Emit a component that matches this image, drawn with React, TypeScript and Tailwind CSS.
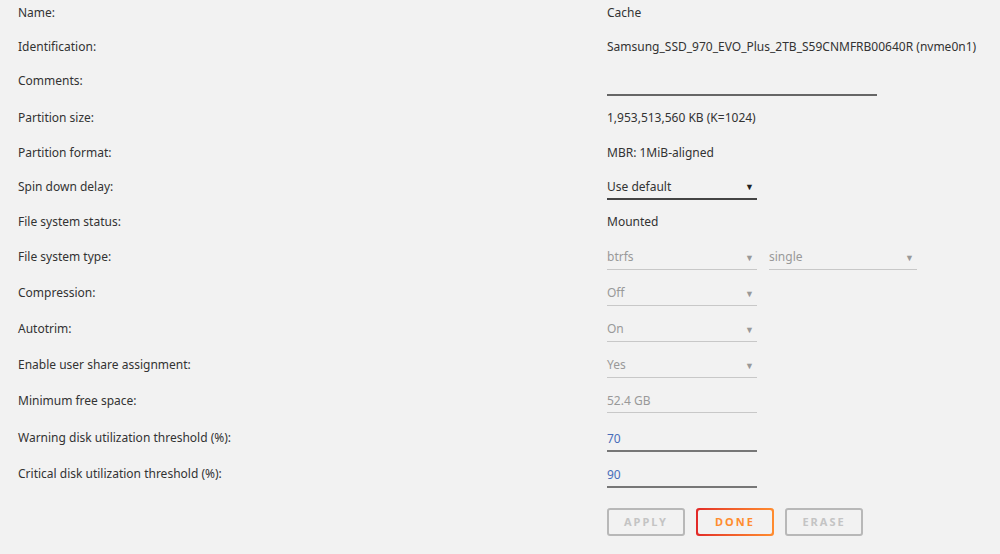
import React from "react";

type Row = { label: string; h: string; value: React.ReactNode };

const Arrow = ({ dark }: { dark?: boolean }) => (
  <span className={`text-[9px] leading-none ${dark ? "text-[#222]" : "text-[#999]"}`}>▼</span>
);

const Sel = ({ text, dark, w = "w-[150px]" }: { text: string; dark?: boolean; w?: string }) => (
  <div
    className={`${w} h-[26px] flex items-center justify-between pr-[3px] pt-[1px] ${
      dark ? "border-b-2 border-[#444] text-[#333]" : "border-b border-[#c8c8c8] text-[#999]"
    }`}
  >
    <span>{text}</span>
    <Arrow dark={dark} />
  </div>
);

const Plain = ({ text }: { text: string }) => (
  <div className="h-[25px] pt-[1px] flex items-center text-[#333]">{text}</div>
);

export default function App() {
  const rows: Row[] = [
    { label: "Name:", h: "h-[34px]", value: <Plain text="Cache" /> },
    { label: "Identification:", h: "h-[34px]", value: <Plain text="Samsung_SSD_970_EVO_Plus_2TB_S59CNMFRB00640R (nvme0n1)" /> },
    { label: "Comments:", h: "h-[37px]", value: <div className="w-[270px] h-[28px] border-b-2 border-[#666]" /> },
    { label: "Partition size:", h: "h-[35px]", value: <Plain text="1,953,513,560 KB (K=1024)" /> },
    { label: "Partition format:", h: "h-[34px]", value: <Plain text="MBR: 1MiB-aligned" /> },
    { label: "Spin down delay:", h: "h-[35px]", value: <Sel text="Use default" dark /> },
    { label: "File system status:", h: "h-[35px]", value: <Plain text="Mounted" /> },
    {
      label: "File system type:",
      h: "h-[36px]",
      value: (
        <div className="flex gap-[12px]">
          <Sel text="btrfs" />
          <Sel text="single" w="w-[148px]" />
        </div>
      ),
    },
    { label: "Compression:", h: "h-[36px]", value: <Sel text="Off" /> },
    { label: "Autotrim:", h: "h-[36px]", value: <Sel text="On" /> },
    { label: "Enable user share assignment:", h: "h-[36px]", value: <Sel text="Yes" /> },
    {
      label: "Minimum free space:",
      h: "h-[37px]",
      value: (
        <div className="w-[150px] h-[25px] pt-[1px] border-b border-[#c8c8c8] text-[#999] flex items-center">
          52.4 GB
        </div>
      ),
    },
    {
      label: "Warning disk utilization threshold (%):",
      h: "h-[36px]",
      value: (
        <div className="w-[150px] h-[27px] border-b-2 border-[#777] text-[#486dba] pt-[2px] leading-[24px]">70</div>
      ),
    },
    {
      label: "Critical disk utilization threshold (%):",
      h: "h-[36px]",
      value: (
        <div className="w-[150px] h-[27px] border-b-2 border-[#777] text-[#486dba] pt-[2px] leading-[24px]">90</div>
      ),
    },
  ];

  const btn =
    "w-[78px] h-[28px] rounded-[3px] text-[11px] font-bold tracking-[2px] flex items-center justify-center";

  return (
    <div
      className="w-[1000px] h-[554px] bg-[#f2f2f2] text-[12px] text-[#333] overflow-hidden"
      style={{ fontFamily: '"Noto Sans", "Open Sans", sans-serif' }}
    >
      {rows.map((r) => (
        <div key={r.label} className={`flex ${r.h}`}>
          <div className="w-[607px] pl-[18px] h-[25px] pt-[1px] flex items-center">{r.label}</div>
          <div>{r.value}</div>
        </div>
      ))}
      <div className="flex gap-[11px] pl-[607px] mt-[11px]">
        <div className={`${btn} border-2 border-[#b8b8b8] text-[#c4c4c4]`}>APPLY</div>
        <div className="w-[78px] h-[28px] rounded-[3px] p-[2px] bg-gradient-to-r from-[#e22828] to-[#ff8c2f]">
          <div className="w-full h-full rounded-[2px] bg-[#f2f2f2] flex items-center justify-center text-[11px] font-bold tracking-[2px] text-[#ff8c2f]">
            DONE
          </div>
        </div>
        <div className={`${btn} border-2 border-[#b8b8b8] text-[#c4c4c4]`}>ERASE</div>
      </div>
    </div>
  );
}
